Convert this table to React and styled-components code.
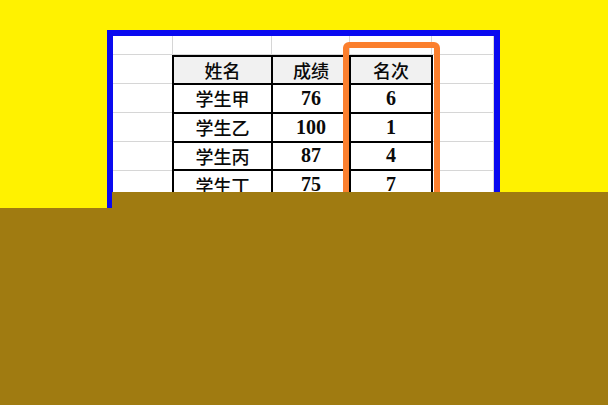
import styled, { createGlobalStyle } from 'styled-components';

const GlobalStyle = createGlobalStyle`
    html, body {
        margin: 0;
        padding: 0;
        background: #fff200;
        overflow: hidden;
    }
`

const Page = styled.div`
    position: relative;
    width: 608px;
    height: 405px;
    padding: 30px 0 0 107px;
    box-sizing: border-box;
`

const Frame = styled.div`
    width: 393px;
    border: 6px solid #0a0af0;
    box-sizing: border-box;
    background: #ffffff;
`

const Sheet = styled.div`
    position: relative;
    display: grid;
    grid-template-columns: 60px 99px 78px 82px 1fr;
    grid-template-rows: 19px repeat(6, 29px);
`

const GridCell = styled.div`
    border-right: 1px solid #d6d6d6;
    border-bottom: 1px solid #d6d6d6;
    box-sizing: border-box;
`

const TableWrap = styled.div`
    grid-column: 2 / 5;
    grid-row: 2 / 7;
    margin-left: -1px;
    z-index: 1;
`

const Table = styled.table`
    width: calc(100% + 1px);
    height: 100%;
    border-collapse: collapse;
    table-layout: fixed;
    background: #ffffff;
`

const Col = styled.col`
    width: ${(p) => p.$w}px;
`

const Th = styled.th`
    border: 2px solid #000000;
    background: #f1f1f1;
    padding: 0;
    font-family: "Noto Sans CJK SC", sans-serif;
    font-weight: 500;
    font-size: 18px;
    color: #0a0a0a;
    text-align: center;
`

const Td = styled.td`
    border: 2px solid #000000;
    padding: 0;
    text-align: center;
    color: #0a0a0a;
    font-size: ${(p) => (p.$num ? 20 : 18)}px;
    font-family: ${(p) => (p.$num ? '"Liberation Serif", serif' : '"Noto Sans CJK SC", sans-serif')};
    font-weight: ${(p) => (p.$num ? 700 : 500)};
`

const Highlight = styled.div`
    position: absolute;
    left: 230px;
    top: 6px;
    width: 97px;
    height: 200px;
    border: 6.5px solid #fb7f2e;
    border-radius: 6px;
    box-sizing: border-box;
    z-index: 2;
`

const Cover = styled.div`
    position: absolute;
    left: ${(p) => p.$left}px;
    top: ${(p) => p.$top}px;
    right: 0;
    bottom: 0;
    background: #a07b11;
    z-index: 3;
`

const rows = [
    ['学生甲', '76', '6'],
    ['学生乙', '100', '1'],
    ['学生丙', '87', '4'],
    ['学生丁', '75', '7'],
];

const App = () => {
    return (
        <>
            <GlobalStyle />
            <Page>
                <Frame>
                    <Sheet>
                        {Array.from({ length: 35 }).map((_, i) => (
                            <GridCell
                                key={i}
                                style={{ gridColumn: (i % 5) + 1, gridRow: Math.floor(i / 5) + 1 }}
                            />
                        ))}
                        <TableWrap>
                            <Table>
                                <colgroup>
                                    <Col $w={99} />
                                    <Col $w={78} />
                                    <Col $w={82} />
                                </colgroup>
                                <thead>
                                    <tr>
                                        <Th>姓名</Th>
                                        <Th>成绩</Th>
                                        <Th>名次</Th>
                                    </tr>
                                </thead>
                                <tbody>
                                    {rows.map((r) => (
                                        <tr key={r[0]}>
                                            <Td>{r[0]}</Td>
                                            <Td $num>{r[1]}</Td>
                                            <Td $num>{r[2]}</Td>
                                        </tr>
                                    ))}
                                </tbody>
                            </Table>
                        </TableWrap>
                        <Highlight />
                    </Sheet>
                </Frame>
                {/* dark band over the lower part */}
                <Cover $left={112} $top={192} />
                <Cover $left={0} $top={208} />
            </Page>
        </>
    );
};

export default App;
